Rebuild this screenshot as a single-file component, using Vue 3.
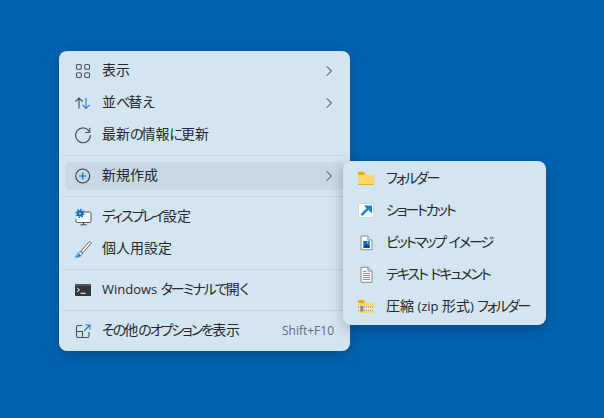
<script setup>
// メインメニューの項目(sep は区切り線)
const mainItems = [
  { icon: "view", label: "表示", arrow: true },
  { icon: "sort", label: "並べ替え", arrow: true },
  { icon: "refresh", label: "最新の情報に更新" },
  { sep: true },
  { icon: "new", label: "新規作成", arrow: true, active: true },
  { sep: true },
  { icon: "display", label: "ディスプレイ設定" },
  { icon: "brush", label: "個人用設定" },
  { sep: true },
  { icon: "terminal", label: "Windows ターミナルで開く" },
  { sep: true },
  { icon: "more", label: "その他のオプションを表示", shortcut: "Shift+F10" },
];

const subItems = [
  { icon: "folder", label: "フォルダー" },
  { icon: "shortcut", label: "ショートカット" },
  { icon: "bitmap", label: "ビットマップ イメージ" },
  { icon: "text", label: "テキスト ドキュメント" },
  { icon: "zip", label: "圧縮 (zip 形式) フォルダー" },
];

// かなと英字は詰め幅が違うので、文字種ごとに分ける
function runs(text) {
  return text.match(/[\u3040-\u30ff]+|[\x20-\x7e]+|[^\u3040-\u30ff\x20-\x7e]+/g).map((t) => ({
    text: t,
    kind: /^[\u3040-\u30ff]/.test(t) ? "kana" : /^[\x20-\x7e]/.test(t) ? "latin" : "kanji",
  }));
}
</script>

<template>
  <div class="desktop">
    <div class="menu main-menu">
      <template v-for="(item, i) in mainItems" :key="i">
        <div v-if="item.sep" class="sep"></div>
        <div v-else class="row" :class="{ active: item.active }">
          <svg class="icon" viewBox="0 0 20 20" fill="none">
            <g v-if="item.icon === 'view'" stroke="#4c4f52" stroke-width="1.1">
              <rect x="3.5" y="3.5" width="4.8" height="4.8" rx="1.3" />
              <rect x="11.7" y="3.5" width="4.8" height="4.8" rx="1.3" />
              <rect x="3.5" y="11.7" width="4.8" height="4.8" rx="1.3" />
              <rect x="11.7" y="11.7" width="4.8" height="4.8" rx="1.3" />
            </g>
            <g v-else-if="item.icon === 'sort'" stroke-width="1.1">
              <path d="M6 15.5V5M2.4 8.6 6 5l3.6 3.6" stroke="#44474a" />
              <path d="M13 5v10.5M9.6 11.9l3.4 3.6 3.6-3.6" stroke="#1a7fd4" />
            </g>
            <g v-else-if="item.icon === 'refresh'" stroke="#4c4f52" stroke-width="1.1">
              <path d="M16.4 6.6A7.4 7.4 0 1 0 17.4 10" />
              <path d="M16.8 2.8v4.7h-4.6" />
            </g>
            <g v-else-if="item.icon === 'new'">
              <circle cx="9.7" cy="10" r="7" stroke="#3c3f42" stroke-width="1.1" />
              <path d="M9.7 6.4v7.2M6.1 10h7.2" stroke="#0f6cbd" stroke-width="1.2" />
            </g>
            <g v-else-if="item.icon === 'display'">
              <path d="M3 5h13.6a1.4 1.4 0 0 1 1.4 1.4v7.7a1.4 1.4 0 0 1-1.4 1.4H4.4A1.4 1.4 0 0 1 3 14.1z" fill="#fafcfd" />
              <path d="M10 5h6.6A1.4 1.4 0 0 1 18 6.4v7.7a1.4 1.4 0 0 1-1.4 1.4H4.4A1.4 1.4 0 0 1 3 14.1V12" stroke="#44484b" stroke-width=".9" />
              <path d="M10.5 15.5v2.2M7.5 17.8h6" stroke="#3d4043" />
              <circle cx="7" cy="6.4" r="3.2" fill="#0f6cbd" />
              <circle cx="7" cy="6.4" r="3.9" stroke="#0f6cbd" stroke-width="1.3" stroke-dasharray="1.6 1.4" />
              <circle cx="7" cy="6.4" r="1" fill="#cfe4f7" />
            </g>
            <g v-else-if="item.icon === 'brush'">
              <path d="M17.6 3c.8.6.5 1.4-.2 2.2l-7.6 8.6-1.9-1.6 7.5-8.6c.7-.8 1.4-1.2 2.2-.6z" fill="#f6f9fb" stroke="#55585b" stroke-width=".9" />
              <path d="M7.4 12.6l2 1.7c-.3 2.2-2.6 4-7.2 3.9 1.8-1.2 1.2-3.9 5.2-5.6z" fill="#f6f9fb" stroke="#1a7fd4" stroke-width=".9" />
              <path d="M6 14.6l2 1.6c-1 1.2-2.6 1.8-5 2 1.4-1 1.4-2.4 3-3.6z" fill="#1a7fd4" />
            </g>
            <g v-else-if="item.icon === 'terminal'">
              <rect x="2" y="4" width="16" height="12" rx=".8" fill="#333538" />
              <rect x="2" y="4" width="16" height="2" fill="#55575a" />
              <path d="M4.2 8l2.3 1.9-2.3 1.9" stroke="#fff" />
              <path d="M7.5 13.3h5" stroke="#fff" stroke-width="1.1" />
            </g>
            <g v-else-if="item.icon === 'more'" stroke-width="1.1">
              <path d="M9 4.5H5a1.5 1.5 0 0 0-1.5 1.5v9A1.5 1.5 0 0 0 5 16.5h9.5A1.5 1.5 0 0 0 16 15v-4" stroke="#4c4f52" />
              <path d="M3.5 10.5h6v6" stroke="#4c4f52" />
              <path d="M11 10l6-6M12.5 4h4.5v4.5" stroke="#1a7fd4" />
            </g>
          </svg>
          <span class="label"><span v-for="(r, n) in runs(item.label)" :key="n" :class="r.kind">{{ r.text }}</span></span>
          <span v-if="item.shortcut" class="shortcut">{{ item.shortcut }}</span>
          <svg v-if="item.arrow" class="arrow" viewBox="0 0 8 12" fill="none">
            <path d="M1.6 1.4 6.4 6l-4.8 4.6" stroke="#656c73" stroke-width="1.1" />
          </svg>
        </div>
      </template>
    </div>

    <div class="menu sub-menu">
      <div v-for="item in subItems" :key="item.label" class="row">
        <svg class="icon" viewBox="0 0 20 20" fill="none">
          <g v-if="item.icon === 'folder'">
            <path d="M2 4.7a1 1 0 0 1 1-1h4.4l1.4 1.6V9H2z" fill="#f0a90f" />
            <path d="M2 7h15a1 1 0 0 1 1 1v8a1 1 0 0 1-1 1H3a1 1 0 0 1-1-1z" fill="#fdd76a" />
            <path d="M2 16h16a1 1 0 0 1-1 1H3a1 1 0 0 1-1-1z" fill="#e9a92a" />
          </g>
          <g v-else-if="item.icon === 'shortcut'">
            <rect x="2.5" y="3.5" width="15" height="14" fill="#fbfdfe" stroke="#cfd8de" />
            <path d="M5.5 15.2l6.5-6.5" stroke="#1784dd" stroke-width="2.6" />
            <path d="M7.8 5.4H16v8.2z" fill="#1784dd" />
          </g>
          <g v-else-if="item.icon === 'bitmap'">
            <path d="M5 4h7l4 4v9.7H5z" fill="#fbfcfd" stroke="#8a8f94" />
            <path d="M12 4v4h4" fill="#e6eaee" stroke="#8a8f94" />
            <rect x="7.3" y="9" width="6.4" height="6.8" fill="#1565b8" />
            <path d="M7.3 15.8l2.8-3.4 1.5 1.6 1-1 1.1 1.3v1.5z" fill="#0c3f7c" />
            <rect x="10.8" y="9.8" width="1.6" height="1.6" fill="#9fd4ff" />
          </g>
          <g v-else-if="item.icon === 'text'">
            <path d="M5 3.2h7.2L16 7v11.3H5z" fill="#f7f9fa" stroke="#85898d" />
            <path d="M12 3.2V7h4" fill="#e3e6e9" stroke="#85898d" />
            <path d="M7 7.5h3.5M7 9.5h7M7 11.5h7M7 13.5h7M7 15.5h7" stroke="#8e9296" />
          </g>
          <g v-else-if="item.icon === 'zip'">
            <path d="M2 5a1 1 0 0 1 1-1h4.4l1.4 1.6V9H2z" fill="#f0a90f" />
            <path d="M2 7h15a1 1 0 0 1 1 1v8a1 1 0 0 1-1 1H3a1 1 0 0 1-1-1z" fill="#fdd76a" />
            <rect x="2" y="10.5" width="16" height="4.6" fill="#e8e4d4" />
            <path d="M2 11h16M2 14.6h16" stroke="#8d8a7c" stroke-dasharray="1 1" />
            <rect x="4.4" y="10" width="3" height="5.4" fill="#8d8a7c" />
          </g>
        </svg>
        <span class="label"><span v-for="(r, n) in runs(item.label)" :key="n" :class="r.kind">{{ r.text }}</span></span>
      </div>
    </div>
  </div>
</template>

<style scoped>
.desktop {
  position: relative;
  width: 604px;
  height: 418px;
  overflow: hidden;
  background: #0063b1;
  font-family: "Open Sans", "Noto Sans CJK JP", sans-serif;
  font-feature-settings: "palt";
  color: #26282a;
}

/* デスクトップ上に浮かぶウィンドウ扱い */
.menu {
  position: absolute;
  box-sizing: border-box;
  background: #d4e5f2;
  border-radius: 8px;
  box-shadow: 0 4px 14px rgba(0, 0, 0, 0.22);
}

.main-menu {
  left: 59px;
  top: 51px;
  width: 291px;
  padding: 4px 0;
}

.sub-menu {
  left: 343px;
  top: 161px;
  width: 203px;
  padding: 1px 0 3px;
  box-shadow: 0 4px 14px rgba(0, 0, 0, 0.26);
}

.row {
  position: relative;
  display: flex;
  align-items: center;
  height: 32px;
  padding: 0 16px 0 14px;
  font-size: 14px;
}

.sub-menu .row {
  padding-left: 13px;
}

.active::before {
  content: "";
  position: absolute;
  inset: 2px 6px;
  background: #c9d8e5;
  border-radius: 5px;
}

.row > * {
  position: relative;
}

.icon {
  flex: none;
  width: 20px;
  height: 20px;
  margin-right: 9px;
}

.sub-menu .icon {
  margin-right: 10px;
}

.label {
  flex: 1;
  margin-top: -4px;
  white-space: nowrap;
}

.sub-menu .label {
  margin-top: -2px;
}

.kana {
  letter-spacing: -2px;
}

.latin {
  font-size: 13px;
}

.shortcut {
  margin-top: -2px;
  font-size: 12px;
  color: #5f6a74;
}

.arrow {
  flex: none;
  width: 8px;
  height: 12px;
  margin-right: 1px;
}

.sep {
  height: 1px;
  margin: 4px;
  background: #c5d4e2;
}
</style>
